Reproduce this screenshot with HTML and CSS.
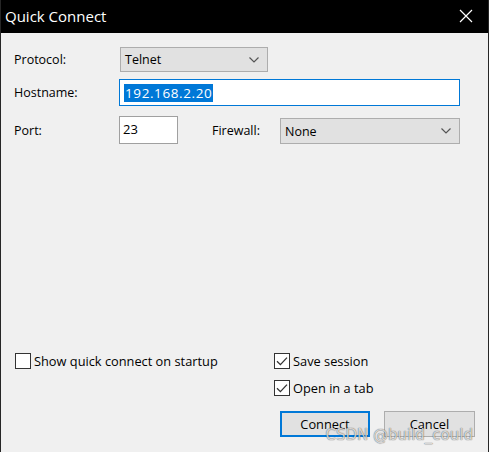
FILE: index.html
```html
<!DOCTYPE html>
<html>
<head>
<meta charset="utf-8">
<link rel="stylesheet" href="styles.css">
</head>
<body>
<div class="window">
  <div class="titlebar">
    <span class="title">Quick Connect</span>
    <svg class="close" width="14" height="14" viewBox="0 0 14 14"><path d="M1 1L13 13M13 1L1 13" stroke="#fff" stroke-width="1.2" fill="none"/></svg>
  </div>
  <div class="form">
    <div class="row r1">
      <span class="label">Protocol:</span>
      <div class="combo protocol"><span>Telnet</span><svg class="chev" width="10" height="6" viewBox="0 0 10 6"><path d="M0.5 0.5L5 5L9.5 0.5" stroke="#555" stroke-width="1.2" fill="none"/></svg></div>
    </div>
    <div class="row r2">
      <span class="label">Hostname:</span>
      <div class="input host"><span class="sel">192.168.2.20</span></div>
    </div>
    <div class="row r3">
      <span class="label">Port:</span>
      <div class="input port">23</div>
      <span class="fwlabel">Firewall:</span>
      <div class="combo firewall"><span>None</span><svg class="chev" width="10" height="6" viewBox="0 0 10 6"><path d="M0.5 0.5L5 5L9.5 0.5" stroke="#555" stroke-width="1.2" fill="none"/></svg></div>
    </div>
  </div>
  <div class="spacer"></div>
  <div class="bottom">
    <div class="leftcol">
      <label class="check"><span class="box"></span>Show quick connect on startup</label>
    </div>
    <div class="rightcol">
      <label class="check"><span class="box"><svg width="14" height="14" viewBox="0 0 14 14"><path d="M2 7.2L5.4 10.6L12 3.6" stroke="#333" stroke-width="1.3" fill="none"/></svg></span>Save session</label>
      <label class="check c2"><span class="box"><svg width="14" height="14" viewBox="0 0 14 14"><path d="M2 7.2L5.4 10.6L12 3.6" stroke="#333" stroke-width="1.3" fill="none"/></svg></span>Open in a tab</label>
      <div class="buttons">
        <div class="btn default">Connect</div>
        <div class="btn">Cancel</div>
      </div>
    </div>
  </div>
  <div class="watermark">CSDN @build_could</div>
</div>
</body>
</html>
```
FILE: styles.css
```css
* { box-sizing: border-box; }
html, body { margin: 0; padding: 0; }
body {
  width: 489px;
  height: 452px;
  overflow: hidden;
  font-family: "Open Sans", "Noto Sans", sans-serif;
  font-size: 12.5px;
  color: #000;
}
.window {
  position: relative;
  width: 489px;
  height: 452px;
  background: #f0f0f0;
  border-left: 1px solid #262626;
  border-right: 1px solid #262626;
  display: flex;
  flex-direction: column;
}
.titlebar {
  height: 33px;
  background: #000;
  color: #fff;
  display: flex;
  align-items: center;
  justify-content: space-between;
  padding: 0 15px 1px 4px;
  flex: none;
}
.title { font-size: 15px; }
.close { display: block; }
.form {
  padding: 14px 0 0 13px;
}
.row { display: flex; align-items: center; }
.label { width: 106px; flex: none; }
.r1 { height: 25px; margin-bottom: 7px; }
.r2 { height: 27px; margin-bottom: 10px; }
.r3 { height: 28px; align-items: flex-end; }
.r3 .label, .r3 .fwlabel { align-self: center; }
.combo {
  background: #e1e1e1;
  border: 1px solid #adadad;
  display: flex;
  align-items: center;
  justify-content: space-between;
  padding: 0 8px 0 4px;
  height: 100%;
}
.protocol { width: 148px; }
.firewall { width: 180px; height: 26px; }
.chev { display: block; }
.input {
  background: #fff;
  border: 1px solid #a0a0a0;
  display: flex;
  align-items: center;
  height: 100%;
  padding-left: 4px;
}
.host {
  width: 341px;
  margin-left: -1px;
  border-color: #0078d7;
}
.sel {
  background: #0078d7;
  color: #fff;
  padding: 0 1px;
  line-height: 18px;
  font-size: 13.5px;
  letter-spacing: 0.6px;
}
.port { width: 59px; margin-left: -1px; padding-left: 3px; align-items: flex-start; padding-top: 3px; font-size: 13px; }
.fwlabel { margin-left: 34px; width: 68px; }
.spacer { flex: 1; }
.bottom {
  display: flex;
  padding: 0 0 15px 14px;
}
.leftcol { width: 259px; }
.rightcol { display: flex; flex-direction: column; }
.check {
  display: flex;
  align-items: center;
  height: 16px;
  line-height: 16px;
  font-size: 12.8px;
}
.c2 { margin-top: 11px; }
.box {
  width: 16px;
  height: 16px;
  background: #fff;
  border: 1px solid #333;
  margin-right: 3px;
  display: flex;
  align-items: center;
  justify-content: center;
  flex: none;
}
.box svg { display: block; }
.buttons {
  display: flex;
  gap: 14px;
  margin-top: 15px;
  margin-left: 6px;
}
.btn {
  width: 91px;
  height: 26px;
  background: #e1e1e1;
  border: 1px solid #adadad;
  display: flex;
  align-items: center;
  justify-content: center;
  font-size: 12.8px;
}
.btn.default { width: 90px; border: 2px solid #0078d7; }
.watermark {
  position: absolute;
  right: 15px;
  bottom: 8px;
  font-family: "DejaVu Sans", sans-serif;
  font-size: 15px;
  color: rgba(255,255,255,0.75);
  text-shadow: 0 0 1px rgba(0,0,0,0.45), 0 0 1px rgba(0,0,0,0.45);
}
```
